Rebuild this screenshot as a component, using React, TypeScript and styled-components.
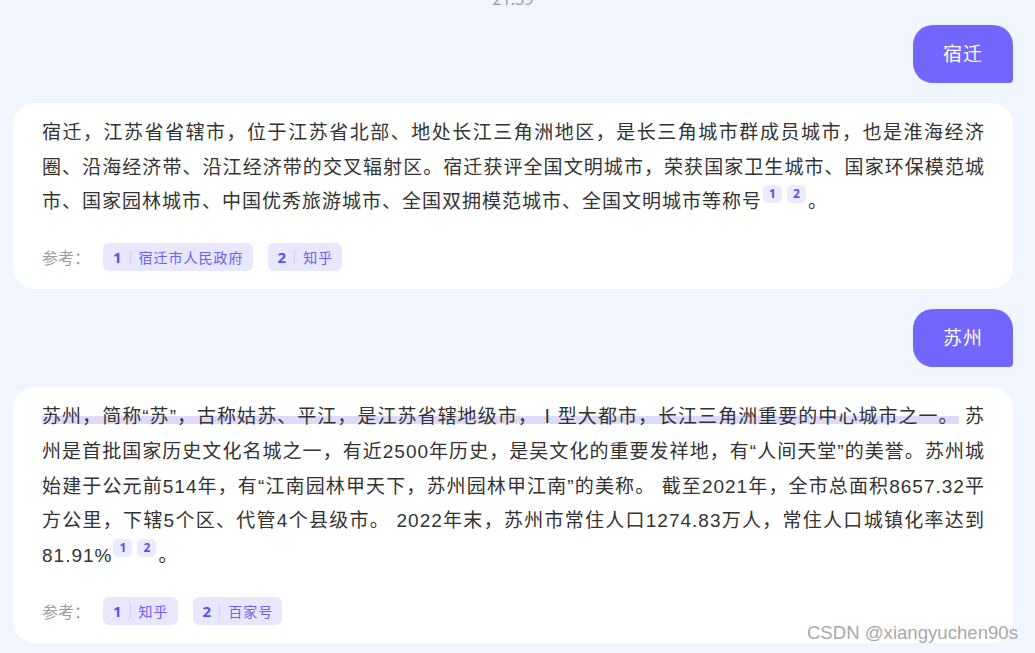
import React from 'react';
import styled, { createGlobalStyle } from 'styled-components';

const GlobalStyle = createGlobalStyle`
  body {
    margin: 0;
    background: #f1f5fe;
    font-family: "Noto Sans", "Noto Sans CJK SC", sans-serif;
  }
`;

const Page = styled.div`
  position: relative;
  display: flex;
  flex-direction: column;
  gap: 20px;
  height: 653px;
  padding: 0 22px 0 13px;
  overflow: hidden;
  box-sizing: border-box;
`;

const Time = styled.div`
  margin-top: -11px;
  margin-bottom: -4px;
  height: 20px;
  line-height: 20px;
  text-align: center;
  font-size: 16px;
  color: #9a9ca3;
`;

const UserRow = styled.div`
  display: flex;
  justify-content: flex-end;
`;

const Bubble = styled.div`
  height: 58px;
  line-height: 58px;
  padding: 0 30px;
  background: #7366ff;
  color: #fff;
  font-size: 19px;
  letter-spacing: 1px;
  border-radius: 20px 20px 4px 20px;
`;

const Card = styled.div`
  background: #fff;
  border-radius: 22px;
  padding: 13px 28px 18px 29px;
`;

// Latin runs use Arial metrics, CJK falls through to Noto Sans CJK
const Answer = styled.div`
  font-family: "Liberation Sans", "Noto Sans CJK SC", sans-serif;
  font-size: 19px;
  letter-spacing: 1px;
  line-height: 34.7px;
  color: #333;
  text-align: justify;
`;

const Mark = styled.span`
  background: linear-gradient(
    to bottom,
    transparent 48%,
    #dedafb 48%,
    #dedafb 88%,
    transparent 88%
  );
`;

const Sup = styled.span<{ first?: boolean }>`
  display: inline-flex;
  align-items: center;
  justify-content: center;
  vertical-align: top;
  width: 19px;
  height: 18px;
  margin: 0 2px 0 ${(p) => (p.first ? '1px' : '3px')};
  border-radius: 5px;
  background: #eceafe;
  color: #5b50f0;
  font-family: "Noto Sans", sans-serif;
  font-size: 12px;
  font-weight: 700;
  letter-spacing: 0;
  line-height: 18px;
`;

const Refs = styled.div`
  display: flex;
  align-items: center;
  gap: 15px;
  margin-top: 23px;
`;

const RefLabel = styled.span`
  font-size: 16px;
  color: #9a9ca3;
  margin-right: -2px;
`;

const Tag = styled.span`
  display: flex;
  align-items: center;
  height: 28px;
  padding: 0 9px 0 10px;
  border-radius: 6px;
  background: #e9e7fd;
`;

const TagNum = styled.span`
  font-size: 15px;
  font-weight: 700;
  color: #5a4ff0;
`;

const TagBar = styled.span`
  width: 1px;
  height: 14px;
  margin: 0 8px;
  background: #d2cdfa;
`;

const TagText = styled.span`
  font-size: 14px;
  letter-spacing: 1px;
  color: #6a60f2;
`;

const Watermark = styled.div`
  position: absolute;
  right: 17px;
  bottom: 9px;
  font-family: "Liberation Sans", Arial, sans-serif;
  font-size: 18.6px;
  color: #a8a8a8;
`;

type Source = { n: number; name: string };

const Sources = ({ items }: { items: Source[] }) => (
  <Refs>
    <RefLabel>参考：</RefLabel>
    {items.map((s) => (
      <Tag key={s.n}>
        <TagNum>{s.n}</TagNum>
        <TagBar />
        <TagText>{s.name}</TagText>
      </Tag>
    ))}
  </Refs>
);

const App: React.FC = () => {
  return (
    <>
      <GlobalStyle />
      <Page>
        <Time>21:39</Time>

        <UserRow>
          <Bubble>宿迁</Bubble>
        </UserRow>

        <Card>
          <Answer>
            宿迁，江苏省省辖市，位于江苏省北部、地处长江三角洲地区，是长三角城市群成员城市，也是淮海经济圈、沿海经济带、沿江经济带的交叉辐射区。宿迁获评全国文明城市，荣获国家卫生城市、国家环保模范城市、国家园林城市、中国优秀旅游城市、全国双拥模范城市、全国文明城市等称号
            <Sup first>1</Sup>
            <Sup>2</Sup>。
          </Answer>
          <Sources
            items={[
              { n: 1, name: '宿迁市人民政府' },
              { n: 2, name: '知乎' },
            ]}
          />
        </Card>

        <UserRow>
          <Bubble>苏州</Bubble>
        </UserRow>

        <Card>
          <Answer>
            <Mark>苏州，简称“苏”，古称姑苏、平江，是江苏省辖地级市，Ⅰ型大都市，长江三角洲重要的中心城市之一。</Mark> 苏州是首批国家历史文化名城之一，有近2500年历史，是吴文化的重要发祥地，有“人间天堂”的美誉。苏州城始建于公元前514年，有“江南园林甲天下，苏州园林甲江南”的美称。 截至2021年，全市总面积8657.32平方公里，下辖5个区、代管4个县级市。 2022年末，苏州市常住人口1274.83万人，常住人口城镇化率达到81.91%
            <Sup first>1</Sup>
            <Sup>2</Sup>。
          </Answer>
          <Sources
            items={[
              { n: 1, name: '知乎' },
              { n: 2, name: '百家号' },
            ]}
          />
        </Card>

        <Watermark>CSDN @xiangyuchen90s</Watermark>
      </Page>
    </>
  );
};

export default App;
